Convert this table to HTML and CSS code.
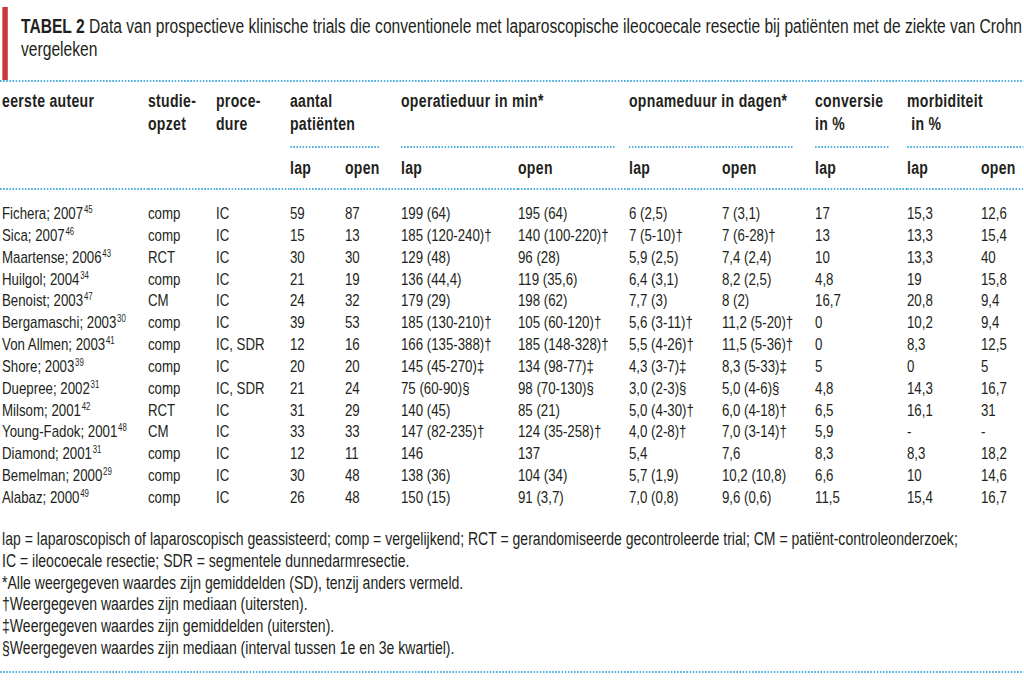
FILE: index.html
```html
<!DOCTYPE html>
<html lang="nl">
<head>
    <meta charset="UTF-8">
    <meta name="viewport" content="width=device-width, initial-scale=1.0">
    <title>Tabel 2 - Laparoscopische ileocoecale resectie</title>
    <link rel="stylesheet" href="styles.css">
</head>
<body>
    <!-- condensed setting: the page is laid out wide and narrowed as a whole -->
    <div class="page">
        <div class="caption">
            <div class="caption-bar"></div>
            <p class="caption-text"><b>TABEL 2</b> Data van prospectieve klinische trials die conventionele met laparoscopische ileocoecale resectie bij patiënten met de ziekte van Crohn vergeleken</p>
        </div>
        <div class="rule"></div>

        <table class="trials">
            <colgroup>
                <col style="width:189.7px">
                <col style="width:87.2px">
                <col style="width:94.9px">
                <col style="width:70.5px">
                <col style="width:71.8px">
                <col style="width:150px">
                <col style="width:142.3px">
                <col style="width:119.2px">
                <col style="width:119.3px">
                <col style="width:117.9px">
                <col style="width:94.9px">
                <col style="width:54.3px">
            </colgroup>
            <thead>
                <tr class="group-row">
                    <th>eerste auteur</th>
                    <th>studie-<br>opzet</th>
                    <th>proce-<br>dure</th>
                    <th colspan="2">aantal<br>patiënten</th>
                    <th colspan="2">operatieduur in min*</th>
                    <th colspan="2">opnameduur in dagen*</th>
                    <th>conversie<br>in %</th>
                    <th colspan="2">morbiditeit<br>&nbsp;in %</th>
                </tr>
                <tr class="subrule-row">
                    <td></td><td></td><td></td>
                    <td colspan="2"><div class="rule rule-aantal"></div></td>
                    <td colspan="2"><div class="rule rule-operatie"></div></td>
                    <td colspan="2"><div class="rule rule-opname"></div></td>
                    <td><div class="rule rule-conversie"></div></td>
                    <td colspan="2"><div class="rule"></div></td>
                </tr>
                <tr class="sub-row">
                    <th></th><th></th><th></th>
                    <th>lap</th><th>open</th>
                    <th>lap</th><th>open</th>
                    <th>lap</th><th>open</th>
                    <th>lap</th>
                    <th>lap</th><th>open</th>
                </tr>
            </thead>
            <tbody>
                <tr><td>Fichera; 2007<sup>45</sup></td><td>comp</td><td>IC</td><td>59</td><td>87</td><td>199 (64)</td><td>195 (64)</td><td>6 (2,5)</td><td>7 (3,1)</td><td>17</td><td>15,3</td><td>12,6</td></tr>
                <tr><td>Sica; 2007<sup>46</sup></td><td>comp</td><td>IC</td><td>15</td><td>13</td><td>185 (120-240)†</td><td>140 (100-220)†</td><td>7 (5-10)†</td><td>7 (6-28)†</td><td>13</td><td>13,3</td><td>15,4</td></tr>
                <tr><td>Maartense; 2006<sup>43</sup></td><td>RCT</td><td>IC</td><td>30</td><td>30</td><td>129 (48)</td><td>96 (28)</td><td>5,9 (2,5)</td><td>7,4 (2,4)</td><td>10</td><td>13,3</td><td>40</td></tr>
                <tr><td>Huilgol; 2004<sup>34</sup></td><td>comp</td><td>IC</td><td>21</td><td>19</td><td>136 (44,4)</td><td>119 (35,6)</td><td>6,4 (3,1)</td><td>8,2 (2,5)</td><td>4,8</td><td>19</td><td>15,8</td></tr>
                <tr><td>Benoist; 2003<sup>47</sup></td><td>CM</td><td>IC</td><td>24</td><td>32</td><td>179 (29)</td><td>198 (62)</td><td>7,7 (3)</td><td>8 (2)</td><td>16,7</td><td>20,8</td><td>9,4</td></tr>
                <tr><td>Bergamaschi; 2003<sup>30</sup></td><td>comp</td><td>IC</td><td>39</td><td>53</td><td>185 (130-210)†</td><td>105 (60-120)†</td><td>5,6 (3-11)†</td><td>11,2 (5-20)†</td><td>0</td><td>10,2</td><td>9,4</td></tr>
                <tr><td>Von Allmen; 2003<sup>41</sup></td><td>comp</td><td>IC, SDR</td><td>12</td><td>16</td><td>166 (135-388)†</td><td>185 (148-328)†</td><td>5,5 (4-26)†</td><td>11,5 (5-36)†</td><td>0</td><td>8,3</td><td>12,5</td></tr>
                <tr><td>Shore; 2003<sup>39</sup></td><td>comp</td><td>IC</td><td>20</td><td>20</td><td>145 (45-270)‡</td><td>134 (98-77)‡</td><td>4,3 (3-7)‡</td><td>8,3 (5-33)‡</td><td>5</td><td>0</td><td>5</td></tr>
                <tr><td>Duepree; 2002<sup>31</sup></td><td>comp</td><td>IC, SDR</td><td>21</td><td>24</td><td>75 (60-90)§</td><td>98 (70-130)§</td><td>3,0 (2-3)§</td><td>5,0 (4-6)§</td><td>4,8</td><td>14,3</td><td>16,7</td></tr>
                <tr><td>Milsom; 2001<sup>42</sup></td><td>RCT</td><td>IC</td><td>31</td><td>29</td><td>140 (45)</td><td>85 (21)</td><td>5,0 (4-30)†</td><td>6,0 (4-18)†</td><td>6,5</td><td>16,1</td><td>31</td></tr>
                <tr><td>Young-Fadok; 2001<sup>48</sup></td><td>CM</td><td>IC</td><td>33</td><td>33</td><td>147 (82-235)†</td><td>124 (35-258)†</td><td>4,0 (2-8)†</td><td>7,0 (3-14)†</td><td>5,9</td><td>-</td><td>-</td></tr>
                <tr><td>Diamond; 2001<sup>31</sup></td><td>comp</td><td>IC</td><td>12</td><td>11</td><td>146</td><td>137</td><td>5,4</td><td>7,6</td><td>8,3</td><td>8,3</td><td>18,2</td></tr>
                <tr><td>Bemelman; 2000<sup>29</sup></td><td>comp</td><td>IC</td><td>30</td><td>48</td><td>138 (36)</td><td>104 (34)</td><td>5,7 (1,9)</td><td>10,2 (10,8)</td><td>6,6</td><td>10</td><td>14,6</td></tr>
                <tr><td>Alabaz; 2000<sup>49</sup></td><td>comp</td><td>IC</td><td>26</td><td>48</td><td>150 (15)</td><td>91 (3,7)</td><td>7,0 (0,8)</td><td>9,6 (0,6)</td><td>11,5</td><td>15,4</td><td>16,7</td></tr>
            </tbody>
        </table>

        <div class="notes">
            <p>lap = laparoscopisch of laparoscopisch geassisteerd; comp = vergelijkend; RCT = gerandomiseerde gecontroleerde trial; CM = patiënt-controleonderzoek;<br>IC = ileocoecale resectie; SDR = segmentele dunnedarmresectie.</p>
            <p>*Alle weergegeven waardes zijn gemiddelden (SD), tenzij anders vermeld.</p>
            <p>†Weergegeven waardes zijn mediaan (uitersten).</p>
            <p>‡Weergegeven waardes zijn gemiddelden (uitersten).</p>
            <p>§Weergegeven waardes zijn mediaan (interval tussen 1e en 3e kwartiel).</p>
        </div>
        <div class="rule rule-bottom"></div>
    </div>
</body>
</html>
```

FILE: styles.css
```css
:root {
    --text-color: #231f20;
    --rule-color: #4fb0e0;
    --accent-color: #c8383a;
}
html, body {
    overflow: hidden;
}
body {
    margin: 0;
    background: #fff;
    color: var(--text-color);
    font-family: 'Liberation Sans', Arial, sans-serif;
    font-size: 17px;
}
.page {
    width: 1312px;
    transform: scaleX(0.78);
    transform-origin: 0 0;
}
.caption {
    display: flex;
    gap: 16.7px;
    height: 73px;
    margin: 7px 0 0 2.6px;
}
.caption-bar {
    width: 7.7px;
    flex: none;
    background-color: var(--accent-color);
}
.caption-text {
    margin: 0;
    padding-top: 8px;
    font-size: 20px;
    line-height: 23px;
}
.rule {
    height: 2px;
    background-image: linear-gradient(to right, var(--rule-color) 0, var(--rule-color) 2px, transparent 2px);
    background-size: 4px 2px;
    background-repeat: repeat-x;
}
.trials {
    width: 100%;
    table-layout: fixed;
    border-collapse: collapse;
}
.trials th, .trials td {
    padding: 0;
    text-align: left;
    vertical-align: top;
    white-space: nowrap;
}
.trials th {
    font-size: 18px;
    font-weight: bold;
    letter-spacing: 0.4px;
    line-height: 23px;
}
.trials tr > :first-child {
    padding-left: 2.6px;
}
.group-row th {
    padding-top: 8px;
    height: 46px;
}
.subrule-row td {
    padding: 10px 0 9px;
}
.rule-aantal { margin-right: 27px; }
.rule-operatie { margin-right: 18px; }
.rule-opname { margin-right: 28px; }
.rule-conversie { margin-right: 22px; }
.sub-row th {
    padding-bottom: 10px;
    background-image: linear-gradient(to right, var(--rule-color) 0, var(--rule-color) 2px, transparent 2px);
    background-size: 4px 2px;
    background-repeat: repeat-x;
    background-position: left bottom;
}
.trials td {
    line-height: 21.85px;
}
.trials tbody tr:first-child td {
    padding-top: 13px;
}
sup {
    font-size: 10px;
    line-height: 0;
    vertical-align: 6px;
    margin-left: 1px;
}
.notes {
    margin-top: 20px;
    padding-left: 2.6px;
    font-size: 18px;
    line-height: 21.85px;
}
.notes p {
    margin: 0;
}
.rule-bottom {
    margin-top: 11px;
}
```
